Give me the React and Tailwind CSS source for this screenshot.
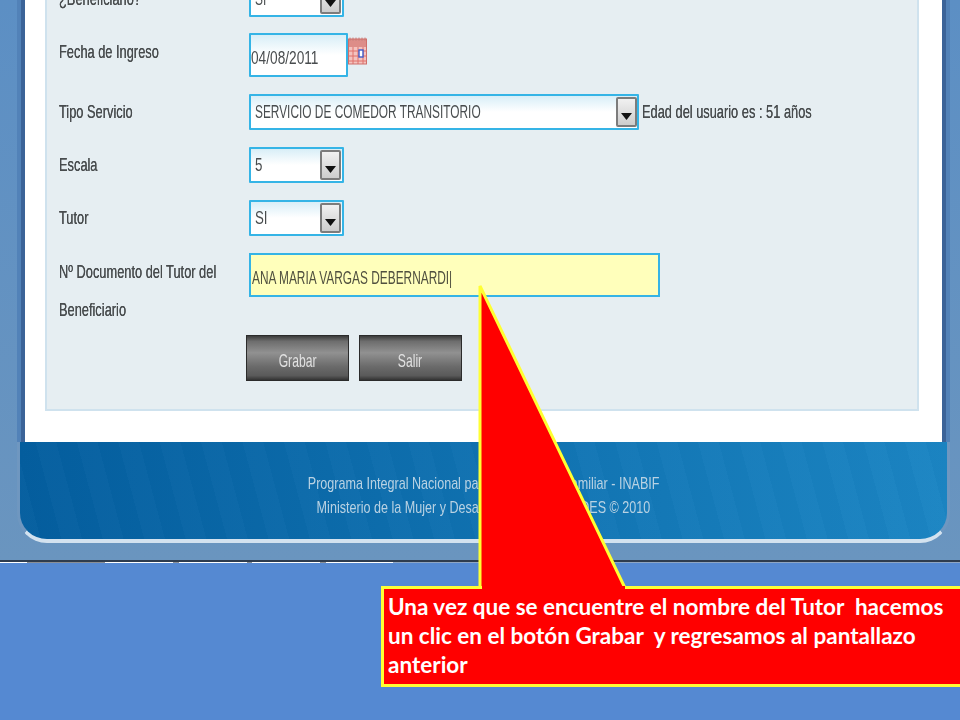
function Label({ children, className = "" }) {
  return (
    <span className={"block origin-left scale-x-[0.675] whitespace-nowrap font-['Liberation_Sans',sans-serif] text-[19px] leading-[22px] text-[#484c4e] blur-[0.3px] [text-shadow:0_0_0.6px_#484c4e] " + className}>
      {children}
    </span>
  );
}

function FieldText({ children, className = "" }) {
  return (
    <span className={"block origin-left whitespace-nowrap font-['Liberation_Sans',sans-serif] text-[19px] leading-[22px] text-[#484c4e] blur-[0.3px] " + className}>
      {children}
    </span>
  );
}

function Arrow() {
  return (
    <span className="flex h-[30px] w-[21px] shrink-0 items-end justify-center rounded-[2px] border-2 border-[#7c7c7c] bg-gradient-to-b from-[#f1f1f1] to-[#cdcdcd] pb-[5px]">
      <svg width="11" height="7" viewBox="0 0 11 7">
        <path d="M0 0H11L5.5 7Z" fill="#111" />
      </svg>
    </span>
  );
}

function Select({ value, wide, scale = "scale-x-[0.625]" }) {
  return (
    <div className={"flex h-[36px] items-center justify-between rounded-[1px] border-[2px] border-[#35b4e6] bg-gradient-to-b from-[#d8eef7] via-white to-white pl-[4px] pr-[1px] " + (wide ? "w-[390px]" : "w-[95px]")}>
      <FieldText className={scale}>{value}</FieldText>
      <Arrow />
    </div>
  );
}

function Row({ label, children, className = "" }) {
  return (
    <div className={"flex " + className}>
      <div className="w-[190px] shrink-0">{label}</div>
      {children}
    </div>
  );
}

function Calendar() {
  return (
    <svg width="19" height="28" viewBox="0 0 19 28" className="shrink-0 blur-[0.3px]">
      <rect x="0.5" y="2" width="18" height="25" fill="#f3c3bf" />
      <rect x="0.5" y="2" width="18" height="8" fill="#dd8d88" />
      <path d="M2 0.5V4M5 0.5V4M8 0.5V4M11 0.5V4M14 0.5V4M17 0.5V4" stroke="#c9837f" strokeWidth="1" />
      <path d="M1 14H18M1 19H18M1 24H18M5 10V27M10 10V27M15 10V27" stroke="#e0706a" strokeWidth="1" />
      <rect x="11" y="13" width="4" height="7" fill="#fff" stroke="#3f5cc8" strokeWidth="1.4" />
      <rect x="0.5" y="2" width="18" height="25" fill="none" stroke="#cf6f6a" strokeWidth="1" />
    </svg>
  );
}

function GrayButton({ children }) {
  return (
    <button className="flex h-[46px] w-[103px] items-center justify-center border border-[#2b2b2b] bg-[linear-gradient(to_bottom,#3c3c3c_0%,#6d6d6d_12%,#919191_38%,#6a6a6a_70%,#5a5a5a_90%,#333333_100%)] pt-[6px] font-['Liberation_Sans',sans-serif] text-[19px] text-[#e2e2e2]">
      <span className="scale-x-[0.64] blur-[0.3px]">{children}</span>
    </button>
  );
}

export default function App() {
  return (
    <div className="relative h-[720px] w-[960px] overflow-hidden bg-[#5589d2]">
      <div className="h-[560px] overflow-hidden bg-gradient-to-b from-[#5c8fc4] to-[#6a95bf] pl-[17px] pr-[10px]">
        <div className="flex h-[543px] flex-col">
          <div className="h-[442px] shrink-0 border-x-[4px] border-[#5282b8]">
            <div className="h-full border-x-[4px] border-[#3b6398] bg-white px-[20px]">
              <div className="h-[411px] w-[874px] border-x-2 border-b-2 border-[#cfe2ee] bg-[#e6eef2] pl-[12px]">
                <div className="flex flex-col">
                  <Row className="-mt-[19px] items-center" label={<Label>¿Beneficiario?</Label>}>
                    <Select value="SI" />
                  </Row>
                  <Row className="mt-[16px]" label={<Label className="mt-[8px]">Fecha de Ingreso</Label>}>
                    <div className="flex items-start">
                      <div className="flex h-[44px] w-[99px] items-center rounded-[1px] border-[2px] border-[#35b4e6] bg-gradient-to-b from-[#d8eef7] via-white to-white pl-[0px] pt-[5px]">
                        <FieldText className="scale-x-[0.72]">04/08/2011</FieldText>
                      </div>
                      <div className="mt-[4px]"><Calendar /></div>
                    </div>
                  </Row>
                  <Row className="mt-[17px] items-center" label={<Label>Tipo Servicio</Label>}>
                    <Select value="SERVICIO DE COMEDOR TRANSITORIO" wide />
                    <div className="ml-[3px] w-[170px]"><Label>Edad del usuario es : 51 años</Label></div>
                  </Row>
                  <Row className="mt-[17px] items-center" label={<Label>Escala</Label>}>
                    <Select value="5" scale="scale-x-[0.7]" />
                  </Row>
                  <Row className="mt-[17px] items-center" label={<Label>Tutor</Label>}>
                    <Select value="SI" scale="scale-x-[0.7]" />
                  </Row>
                  <Row className="mt-[17px]" label={
                    <div className="flex flex-col gap-[16px] pt-[8px]">
                      <Label>Nº Documento del Tutor del</Label>
                      <Label>Beneficiario</Label>
                    </div>
                  }>
                    <div className="flex h-[44px] w-[411px] items-center border-[2px] border-[#35b4e6] bg-[#ffffbb] pl-[1px] pt-[5px]">
                      <FieldText className="scale-x-[0.625] text-[#50503f]">ANA MARIA VARGAS DEBERNARDI|</FieldText>
                    </div>
                  </Row>
                  <div className="ml-[187px] mt-[14px] flex gap-[10px]">
                    <GrayButton>Grabar</GrayButton>
                    <GrayButton>Salir</GrayButton>
                  </div>
                </div>
              </div>
            </div>
          </div>
          <div className="flex flex-1 flex-col items-center rounded-b-[30px] border-x-[3px] border-b-[4px] border-x-[#6f97c0] border-b-[#d3e2ef] bg-[repeating-linear-gradient(75deg,rgba(255,255,255,0.014)_0px,rgba(255,255,255,0.014)_20px,rgba(0,0,0,0.012)_20px,rgba(0,0,0,0.012)_40px),linear-gradient(to_right,#045e9f,#1b85c3)] pt-[30px] font-['Liberation_Sans',sans-serif] text-[17px] leading-[24px] text-[#b9d2e3]">
            <span className="scale-x-[0.74] whitespace-nowrap blur-[0.3px]">Programa Integral Nacional para el Bienestar Familiar - INABIF</span>
            <span className="scale-x-[0.74] whitespace-nowrap blur-[0.3px]">Ministerio de la Mujer y Desarrollo Social - MIMDES © 2010</span>
          </div>
        </div>
      </div>
      <div className="h-[2px] bg-[#2e3c4e]" />
      <div className="flex h-px">
        <div className="w-[27px] bg-white" />
        <div className="w-[78px] bg-[#8a8f96]" />
        <div className="w-[68px] bg-white" />
        <div className="w-[6px] bg-[#8a8f96]" />
        <div className="w-[68px] bg-white" />
        <div className="w-[5px] bg-[#8a8f96]" />
        <div className="w-[68px] bg-white" />
        <div className="w-[6px] bg-[#8a8f96]" />
        <div className="w-[67px] bg-white" />
        <div className="flex-1 bg-[#8fa6c4]" />
      </div>

      <svg width="960" height="720" className="absolute left-0 top-0" viewBox="0 0 960 720">
        <path d="M480 588V286L625 588" fill="#ff0000" stroke="#ffff33" strokeWidth="3" />
      </svg>
      <div className="absolute left-[381px] top-[586px] flex h-[101px] w-[590px] flex-col justify-center border-[3px] border-[#ffff33] bg-[#ff0000] pb-[2px] pl-[4px] font-['Lato',sans-serif] text-[22.5px] font-bold leading-[29px] text-white">
        <span className="whitespace-pre">Una vez que se encuentre el nombre del Tutor  hacemos</span>
        <span className="whitespace-pre">un clic en el botón Grabar  y regresamos al pantallazo</span>
        <span className="whitespace-pre">anterior</span>
      </div>
      <div className="absolute left-[481.5px] top-[586px] h-[3px] w-[143px] bg-[#ff0000]" />
    </div>
  );
}
